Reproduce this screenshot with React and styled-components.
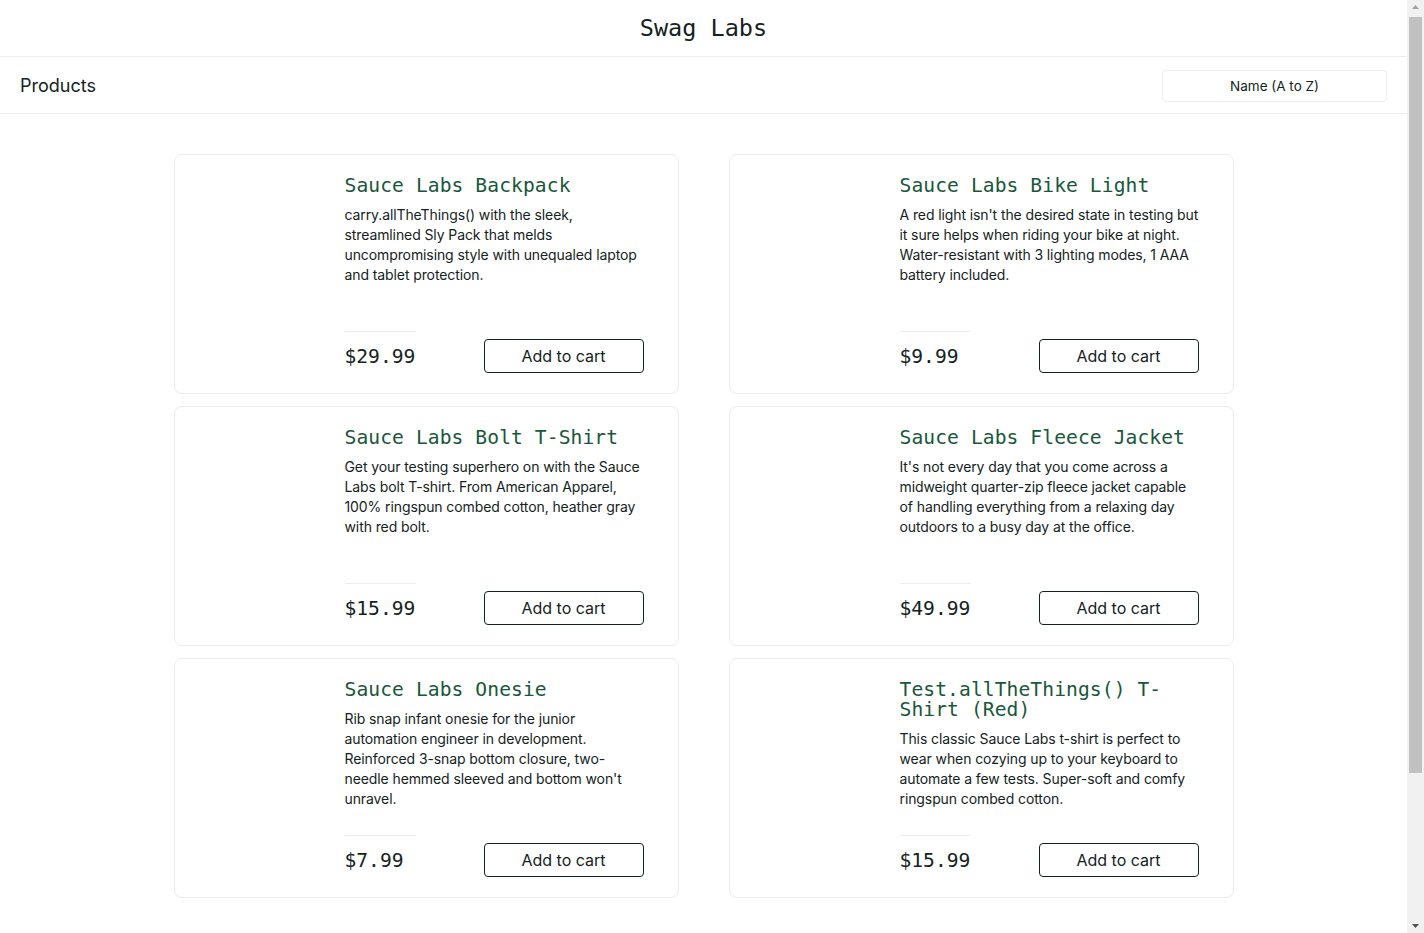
import React from "react";
import styled, { createGlobalStyle } from "styled-components";

const GlobalStyle = createGlobalStyle`
  html, body { margin: 0; padding: 0; background: #fff; }
  body { font-family: "Inter", "Noto Sans", sans-serif; color: #132322; }
  * { box-sizing: border-box; }
`;

const mono = `"DejaVu Sans Mono", "Liberation Mono", monospace`;

const Page = styled.div`
  margin-right: 17px;
`;

const ScrollTrack = styled.div`
  position: fixed;
  top: 0;
  right: 0;
  width: 17px;
  height: 100vh;
  background: #f1f1f1;
  display: flex;
  flex-direction: column;
  align-items: center;
`;

const ScrollArrow = styled.svg`
  width: 17px;
  height: 17px;
  flex: none;
  display: block;
`;

const ScrollThumb = styled.div`
  width: 13px;
  height: 756px;
  background: #c1c1c1;
`;

const ScrollSpace = styled.div`
  flex: 1;
`;

const Header = styled.header`
  height: 57px;
  border-bottom: 1px solid #ededed;
  display: flex;
  align-items: center;
  justify-content: center;
`;

const Logo = styled.div`
  font-family: ${mono};
  font-size: 23.5px;
  color: #132322;
`;

const SubHeader = styled.div`
  height: 57px;
  border-bottom: 1px solid #ededed;
  display: flex;
  align-items: center;
  justify-content: space-between;
  padding: 0 20px 0 20px;
`;

const Title = styled.span`
  font-size: 18px;
  color: #132322;
`;

const Sort = styled.select`
  appearance: none;
  -webkit-appearance: none;
  width: 225px;
  height: 32px;
  border: 1px solid #ededed;
  border-radius: 4px;
  background: #fff;
  font-family: "Inter", sans-serif;
  font-size: 13.5px;
  color: #132322;
  text-align: center;
  text-align-last: center;
  margin-top: 1px;
`;

const Main = styled.main`
  padding: 40px 0 40px;
  display: flex;
  justify-content: center;
`;

const Grid = styled.div`
  display: grid;
  grid-template-columns: 505px 505px;
  column-gap: 50px;
  row-gap: 12px;
`;

const Card = styled.div`
  height: 240px;
  border: 1px solid #ededed;
  border-radius: 8px;
  padding: 20px 34px 20px 20px;
  display: flex;
`;

const ImageBox = styled.div`
  width: 150px;
  flex: none;
`;

const Details = styled.div`
  flex: 1;
  display: flex;
  flex-direction: column;
  min-width: 0;
`;

const Name = styled.div`
  font-family: ${mono};
  font-size: 19.6px;
  line-height: 20px;
  color: #18583a;
  letter-spacing: 0.1px;
  padding-top: 1px;
`;

const Desc = styled.div`
  margin-top: 9px;
  font-size: 14px;
  line-height: 20px;
  color: #132322;
  letter-spacing: -0.1px;
`;

const PriceBar = styled.div`
  margin-top: auto;
`;

const Divider = styled.div`
  width: 71px;
  height: 1px;
  background: #ededed;
`;

const PriceRow = styled.div`
  margin-top: 7px;
  display: flex;
  align-items: center;
  justify-content: space-between;
`;

const Price = styled.div`
  font-family: ${mono};
  font-size: 19.6px;
  font-weight: 500;
  color: #132322;
`;

const CartButton = styled.button`
  width: 160px;
  height: 34px;
  border: 1px solid #132322;
  border-radius: 4px;
  background: #fff;
  font-family: "Inter", sans-serif;
  font-size: 16px;
  color: #132322;
  cursor: pointer;
`;

const Footer = styled.footer`
  height: 166px;
  background: #fff;
`;

const products = [
  {
    name: "Sauce Labs Backpack",
    desc: "carry.allTheThings() with the sleek, streamlined Sly Pack that melds uncompromising style with unequaled laptop and tablet protection.",
    price: "$29.99",
  },
  {
    name: "Sauce Labs Bike Light",
    desc: "A red light isn't the desired state in testing but it sure helps when riding your bike at night. Water-resistant with 3 lighting modes, 1 AAA battery included.",
    price: "$9.99",
  },
  {
    name: "Sauce Labs Bolt T-Shirt",
    desc: "Get your testing superhero on with the Sauce Labs bolt T-shirt. From American Apparel, 100% ringspun combed cotton, heather gray with red bolt.",
    price: "$15.99",
  },
  {
    name: "Sauce Labs Fleece Jacket",
    desc: "It's not every day that you come across a midweight quarter-zip fleece jacket capable of handling everything from a relaxing day outdoors to a busy day at the office.",
    price: "$49.99",
  },
  {
    name: "Sauce Labs Onesie",
    desc: "Rib snap infant onesie for the junior automation engineer in development. Reinforced 3-snap bottom closure, two-needle hemmed sleeved and bottom won't unravel.",
    price: "$7.99",
  },
  {
    name: "Test.allTheThings() T-Shirt (Red)",
    desc: "This classic Sauce Labs t-shirt is perfect to wear when cozying up to your keyboard to automate a few tests. Super-soft and comfy ringspun combed cotton.",
    price: "$15.99",
  },
];

export default function App() {
  return (
    <>
      <GlobalStyle />
      <Page>
        <Header>
          <Logo>Swag Labs</Logo>
        </Header>
        <SubHeader>
          <Title>Products</Title>
          <Sort defaultValue="az">
            <option value="az">Name (A to Z)</option>
            <option value="za">Name (Z to A)</option>
            <option value="lohi">Price (low to high)</option>
            <option value="hilo">Price (high to low)</option>
          </Sort>
        </SubHeader>
        <Main>
          <Grid>
            {products.map((p) => (
              <Card key={p.name}>
                <ImageBox />
                <Details>
                  <Name>{p.name}</Name>
                  <Desc>{p.desc}</Desc>
                  <PriceBar>
                    <Divider />
                    <PriceRow>
                      <Price>{p.price}</Price>
                      <CartButton>Add to cart</CartButton>
                    </PriceRow>
                  </PriceBar>
                </Details>
              </Card>
            ))}
          </Grid>
        </Main>
        <Footer />
      </Page>
      <ScrollTrack aria-hidden="true">
        <ScrollArrow viewBox="0 0 17 17">
          <path d="M8.5 5 L12 9 L5 9 Z" fill="#a3a3a3" />
        </ScrollArrow>
        <ScrollThumb />
        <ScrollSpace />
        <ScrollArrow viewBox="0 0 17 17">
          <path d="M5 8 L12 8 L8.5 12 Z" fill="#505050" />
        </ScrollArrow>
      </ScrollTrack>
    </>
  );
}
